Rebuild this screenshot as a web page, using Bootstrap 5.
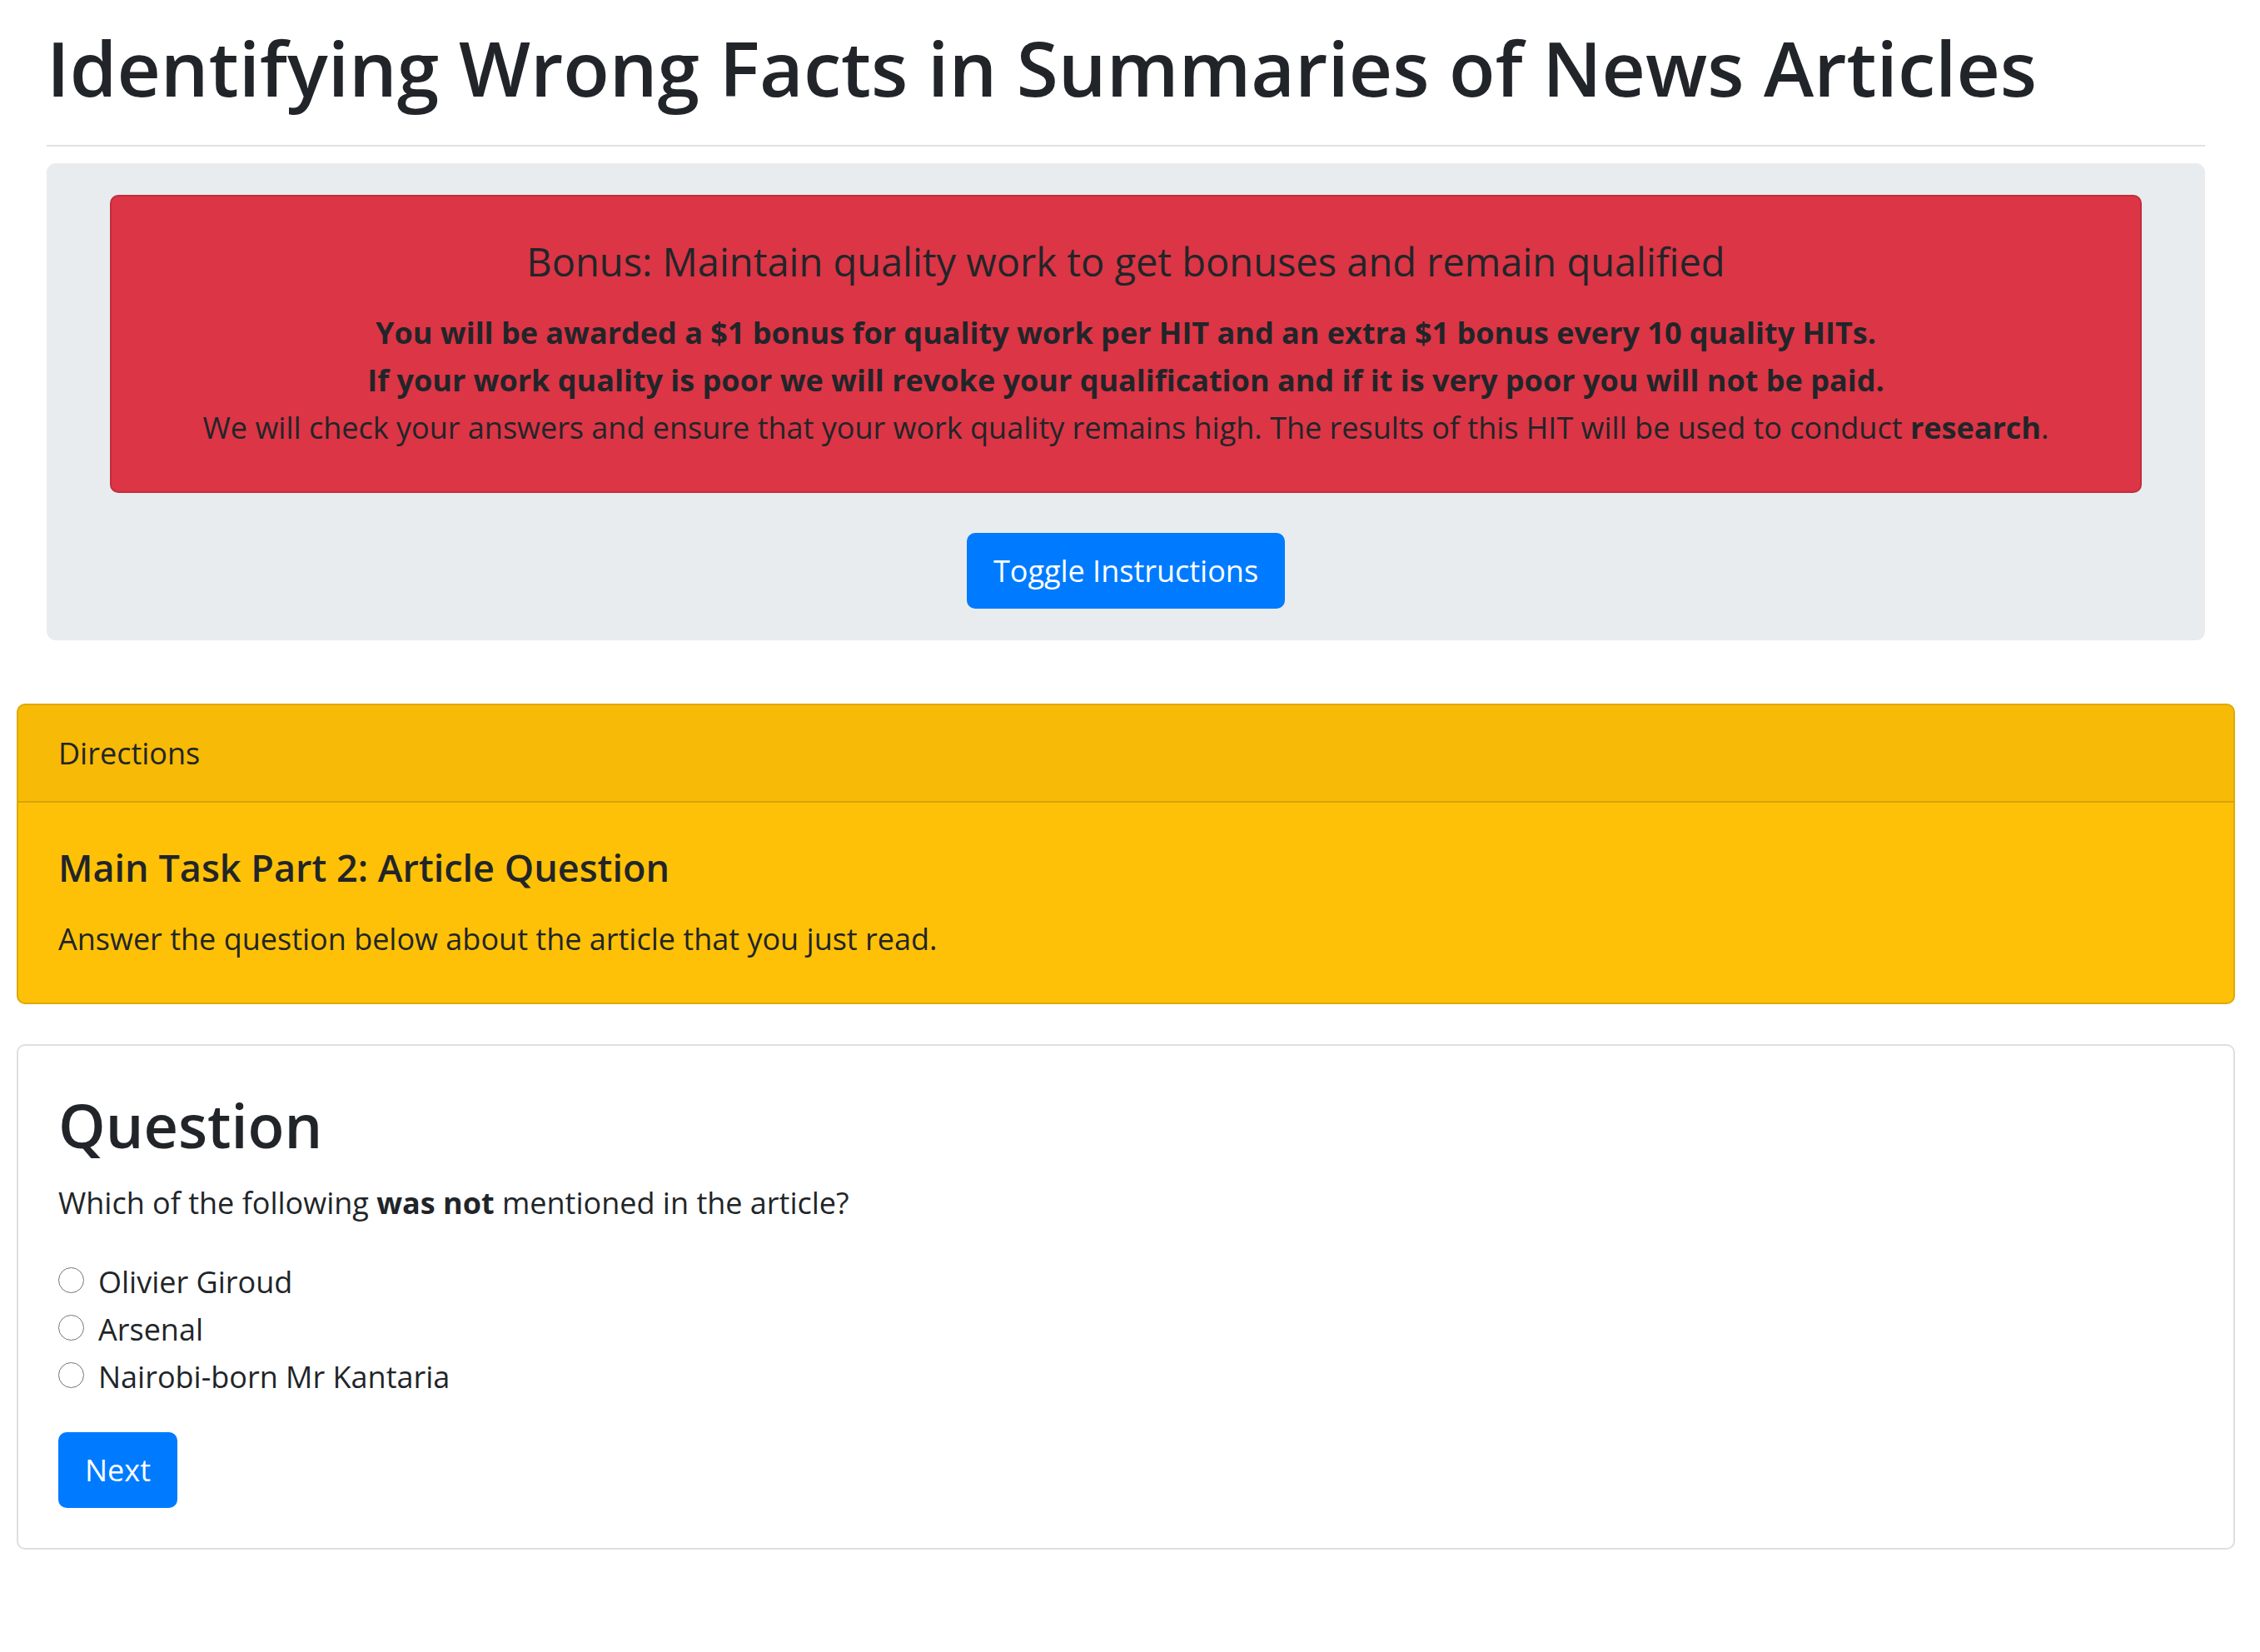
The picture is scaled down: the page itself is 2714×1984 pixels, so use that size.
<!DOCTYPE html>
<html lang="en">
<head>
<meta charset="utf-8">
<meta name="viewport" content="width=device-width, initial-scale=1">
<title>Identifying Wrong Facts in Summaries of News Articles</title>
<link href="https://cdn.jsdelivr.net/npm/bootstrap@5.3.0/dist/css/bootstrap.min.css" rel="stylesheet">
<style>
  body { font-family: "Open Sans", "Noto Sans", sans-serif; font-size: 36px; line-height: 57px; color: #212529; }
  h1, h2, h5, p { margin: 0; }
  strong { font-weight: 700; }
  .page-intro { padding: 24px 66px 0 56px; }
  .page-title { font-size: 91px; line-height: 114px; font-weight: 600; padding-bottom: 36px; border-bottom: 2px solid #dee2e6; margin-bottom: 20px; }
  .intro-panel { background: #e9ecef; border-radius: 11px; padding: 38px 76px; }
  .card { --bs-card-border-width: 2px; --bs-card-border-radius: 10px; --bs-card-inner-border-radius: 8px; --bs-card-border-color: rgba(0, 0, 0, .125); color: #212529; }
  .card-body { padding: 48px; }
  .card h5 { font-size: 45px; line-height: 60px; margin-bottom: 27px; }
  .bonus-card { background: #dc3545; margin-bottom: 48px; }
  .bonus-card h5 { font-size: 47px; font-weight: 500; }
  .btn-primary { --bs-btn-bg: #007bff; --bs-btn-border-color: #007bff; --bs-btn-hover-bg: #0069d9; --bs-btn-font-size: 36px; --bs-btn-line-height: 57px; --bs-btn-padding-y: 15px; --bs-btn-padding-x: 30px; --bs-btn-border-width: 2px; --bs-btn-border-radius: 10px; }
  .task-area { padding: 76px 30px 48px 20px; }
  .directions-card { background: #ffc107; margin-bottom: 48px; }
  .directions-card .card-header { padding: 29px 48px; background: rgba(0, 0, 0, .03); }
  .directions-card h5 { font-weight: 600; }
  .question-title { font-size: 72px; line-height: 94px; font-weight: 600; margin-bottom: 18px; }
  .choices { margin: 38px 0; }
  .choice-row { gap: 17px; }
  .choice-row input { appearance: none; width: 31px; height: 31px; margin: 11px 0 0; border: 1px solid #767676; border-radius: 50%; background: #fff; }
  .choice-row input:checked { background: radial-gradient(#007bff 50%, #fff 54%); }
</style>
<script src="https://cdn.jsdelivr.net/npm/bootstrap@5.3.0/dist/js/bootstrap.bundle.min.js" defer></script>
</head>
<body>
<header class="page-intro">
  <h1 class="page-title">Identifying Wrong Facts in Summaries of News Articles</h1>
  <section class="intro-panel text-center">
    <div class="card bonus-card">
      <div class="card-body">
        <h5>Bonus: Maintain quality work to get bonuses and remain qualified</h5>
        <p><strong>You will be awarded a $1 bonus for quality work per HIT and an extra $1 bonus every 10 quality HITs.</strong><br>
        <strong>If your work quality is poor we will revoke your qualification and if it is very poor you will not be paid.</strong><br>
        We will check your answers and ensure that your work quality remains high. The results of this HIT will be used to conduct <strong>research</strong>.</p>
      </div>
    </div>
    <button type="button" class="btn btn-primary">Toggle Instructions</button>
  </section>
</header>
<main class="task-area">
  <section class="card directions-card">
    <div class="card-header">Directions</div>
    <div class="card-body">
      <h5>Main Task Part 2: Article Question</h5>
      <p>Answer the question below about the article that you just read.</p>
    </div>
  </section>
  <form class="card">
    <div class="card-body">
      <h2 class="question-title">Question</h2>
      <p id="prompt">Which of the following <strong>was not</strong> mentioned in the article?</p>
      <div class="choices" role="radiogroup" aria-labelledby="prompt">
        <div class="choice-row d-flex align-items-start"><input type="radio" name="answer" id="choice1"><label for="choice1">Olivier Giroud</label></div>
        <div class="choice-row d-flex align-items-start"><input type="radio" name="answer" id="choice2"><label for="choice2">Arsenal</label></div>
        <div class="choice-row d-flex align-items-start"><input type="radio" name="answer" id="choice3"><label for="choice3">Nairobi-born Mr Kantaria</label></div>
      </div>
      <button type="button" class="btn btn-primary">Next</button>
    </div>
  </form>
</main>
</body>
</html>
